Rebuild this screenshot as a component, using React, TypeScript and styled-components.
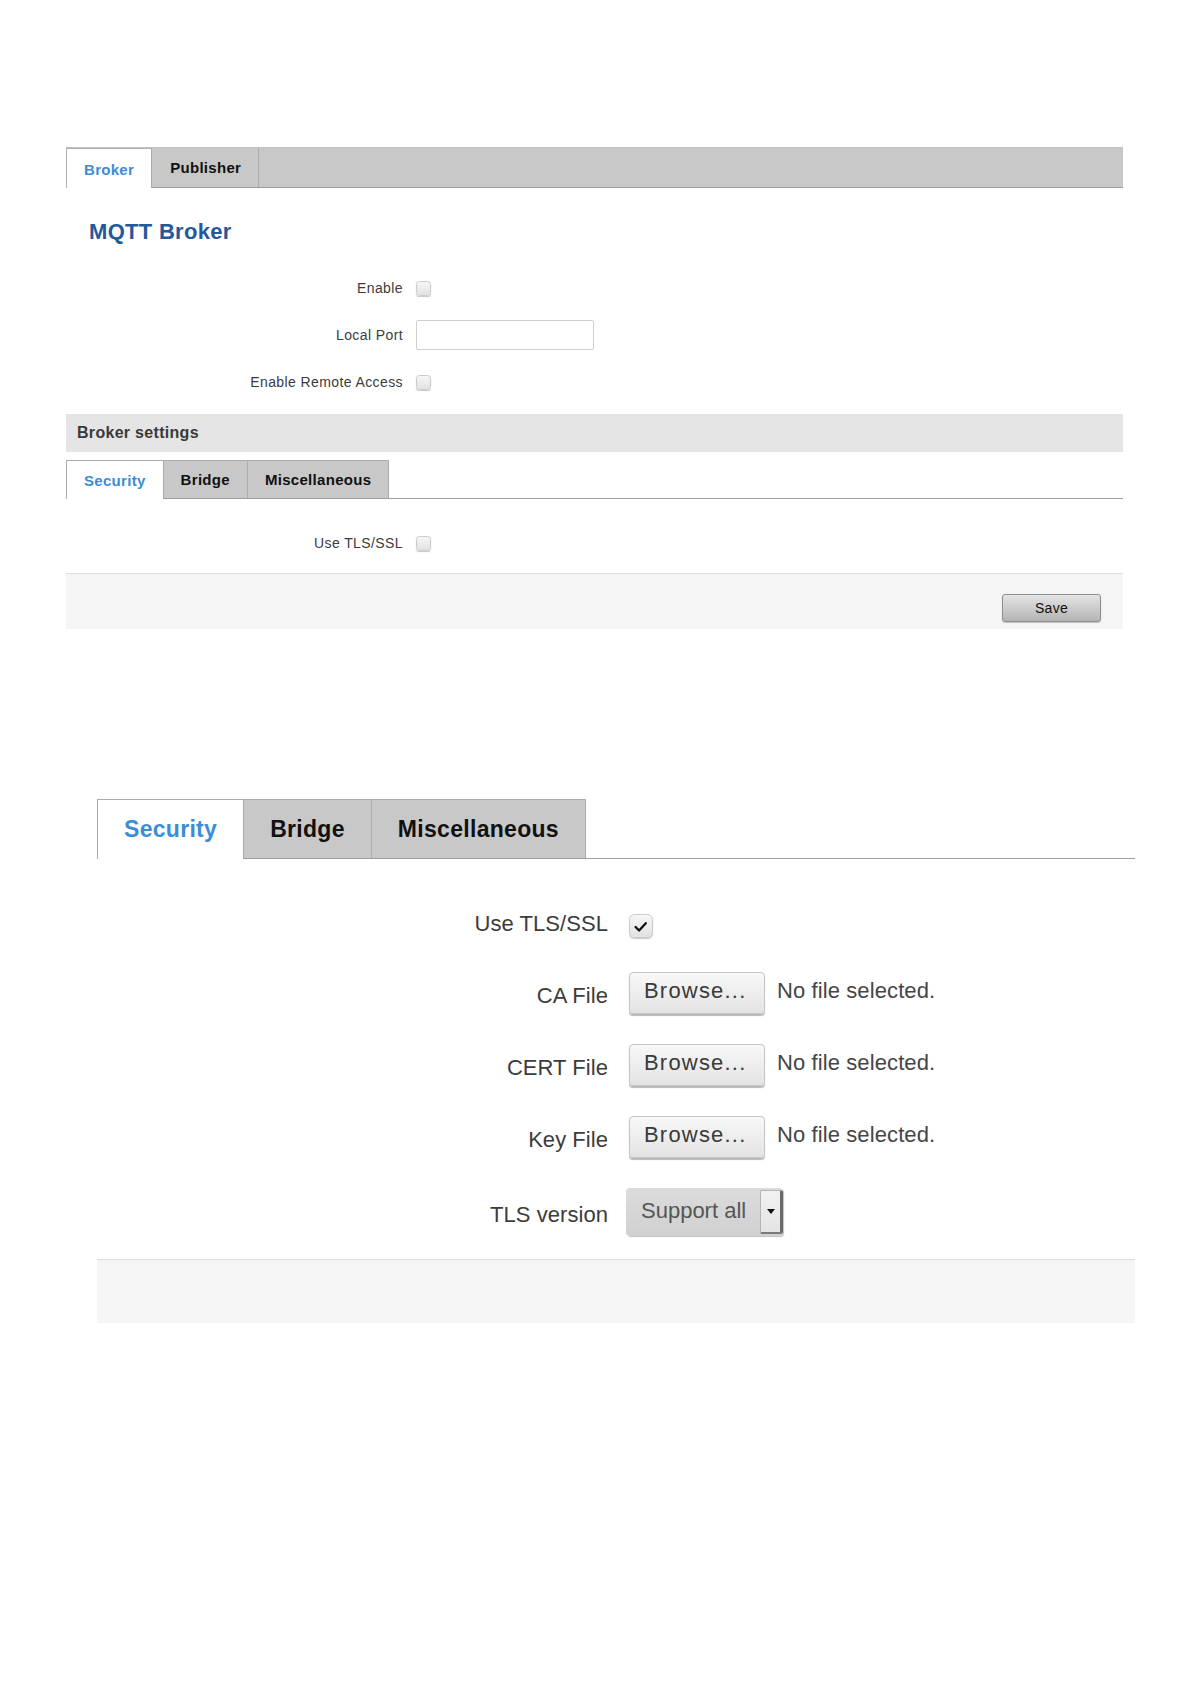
import styled, { createGlobalStyle, ThemeProvider } from "styled-components";

type Look = {
  font: number;
  track: number;
  tabFont: number;
  tabH: number;
  tabPad: number;
  labelW: number;
  gap: number;
  rowH: number;
  rowGap: number;
  rowsTop: number;
  footGap: number;
  footH: number;
  box: number;
  nudge: number;
};

// the same page, once at normal size and once zoomed in
const small: Look = {
  font: 14,
  track: 0.4,
  tabFont: 15,
  tabH: 39,
  tabPad: 17,
  labelW: 337,
  gap: 13,
  rowH: 30,
  rowGap: 17,
  rowsTop: 29,
  footGap: 15,
  footH: 56,
  box: 15,
  nudge: 0,
};

const large: Look = {
  font: 22,
  track: 0.05,
  tabFont: 23,
  tabH: 60,
  tabPad: 26,
  labelW: 511,
  gap: 21,
  rowH: 42,
  rowGap: 30,
  rowsTop: 41,
  footGap: 23,
  footH: 64,
  box: 24,
  nudge: 6,
};

const App = () => {
  return (
    <>
      <GlobalStyle />
      <Page>
        <ThemeProvider theme={small}>
          <Panel $left={66} $width={1057}>
            <MainTabs>
              <MainTab $active>Broker</MainTab>
              <MainTab>Publisher</MainTab>
            </MainTabs>
            <Title>MQTT Broker</Title>
            <Fields $top={28} $bottom={17}>
              <Row>
                <Label>Enable</Label>
                <Check />
              </Row>
              <Row>
                <Label>Local Port</Label>
                <TextInput type="text" />
              </Row>
              <Row>
                <Label>Enable Remote Access</Label>
                <Check />
              </Row>
            </Fields>
            <SectionBar>Broker settings</SectionBar>
            <SubTabs $top={8}>
              <SubTab $active>Security</SubTab>
              <SubTab>Bridge</SubTab>
              <SubTab>Miscellaneous</SubTab>
            </SubTabs>
            <Fields>
              <Row>
                <Label>Use TLS/SSL</Label>
                <Check />
              </Row>
            </Fields>
            <Footer>
              <SaveButton>Save</SaveButton>
            </Footer>
          </Panel>
        </ThemeProvider>

        <ThemeProvider theme={large}>
          <Panel $left={97} $width={1038} $top={170}>
            <SubTabs>
              <SubTab $active>Security</SubTab>
              <SubTab>Bridge</SubTab>
              <SubTab>Miscellaneous</SubTab>
            </SubTabs>
            <Fields>
              <Row>
                <Label>Use TLS/SSL</Label>
                <Check $on />
              </Row>
              {["CA File", "CERT File", "Key File"].map(name => (
                <Row key={name}>
                  <Label>{name}</Label>
                  <BrowseButton>Browse...</BrowseButton>
                  <FileName>No file selected.</FileName>
                </Row>
              ))}
              <Row>
                <Label>TLS version</Label>
                <Select>
                  <SelectText>Support all</SelectText>
                  <SelectArrow>
                    <svg width="8" height="5" viewBox="0 0 8 5">
                      <path d="M0 0h8L4 5z" fill="#111" />
                    </svg>
                  </SelectArrow>
                </Select>
              </Row>
            </Fields>
            <Footer />
          </Panel>
        </ThemeProvider>
      </Page>
    </>
  );
};

const Check = ({ $on }: { $on?: boolean }) => (
  <Box>
    {$on && (
      <svg width="70%" height="70%" viewBox="0 0 24 24">
        <path d="M4 12.5l5.5 5.5L20 6.5" fill="none" stroke="#111" strokeWidth="3.6" strokeLinecap="round" strokeLinejoin="round" />
      </svg>
    )}
  </Box>
);

const GlobalStyle = createGlobalStyle`
  html, body {
    margin: 0;
    padding: 0;
    background: #ffffff;
  }
  body {
    font-family: "Liberation Sans", Arial, sans-serif;
    color: #333333;
  }
`;

const Page = styled.div`
  min-height: 1684px;
  padding-top: 147px;
  display: flex;
  flex-direction: column;
  align-items: flex-start;
  box-sizing: border-box;
`;

const Panel = styled.section<{ $left: number; $width: number; $top?: number }>`
  width: ${p => p.$width}px;
  margin-left: ${p => p.$left}px;
  margin-top: ${p => p.$top ?? 0}px;
  display: flex;
  flex-direction: column;
`;

const MainTabs = styled.div`
  height: 41px;
  display: flex;
  align-items: flex-end;
  background: #c8c8c8;
  border-top: 1px solid #c2c2c2;
  border-bottom: 1px solid #9c9c9c;
  box-sizing: border-box;
`;

const MainTab = styled.div<{ $active?: boolean }>`
  height: ${p => (p.$active ? 40 : 39)}px;
  margin-bottom: ${p => (p.$active ? -1 : 0)}px;
  padding: ${p => (p.$active ? "2px 17px 0" : "0 17px 2px")};
  display: flex;
  align-items: center;
  box-sizing: border-box;
  font-size: 15px;
  font-weight: 700;
  letter-spacing: 0.3px;
  color: ${p => (p.$active ? "#3b8dd5" : "#111111")};
  background: ${p => (p.$active ? "#ffffff" : "transparent")};
  border-left: 1px solid ${p => (p.$active ? "#b0b0b0" : "transparent")};
  border-right: 1px solid #ababab;
  border-top: 1px solid ${p => (p.$active ? "#b0b0b0" : "transparent")};
`;

const Title = styled.h2`
  margin: 31px 0 0 23px;
  font-size: 22px;
  line-height: 26px;
  font-weight: 700;
  letter-spacing: 0.3px;
  color: #25589a;
`;

const Fields = styled.div<{ $top?: number; $bottom?: number }>`
  display: flex;
  flex-direction: column;
  gap: ${p => p.theme.rowGap}px;
  margin-top: ${p => p.$top ?? p.theme.rowsTop}px;
  margin-bottom: ${p => p.$bottom ?? p.theme.footGap}px;
`;

const Row = styled.div`
  min-height: ${p => p.theme.rowH}px;
  display: flex;
  align-items: center;
  gap: ${p => p.theme.gap}px;
`;

const Label = styled.label`
  width: ${p => p.theme.labelW}px;
  padding-top: ${p => p.theme.nudge}px;
  flex-shrink: 0;
  text-align: right;
  font-size: ${p => p.theme.font}px;
  letter-spacing: ${p => p.theme.track}px;
  color: #3c3c3c;
`;

const Box = styled.span`
  width: ${p => p.theme.box}px;
  height: ${p => p.theme.box}px;
  margin-top: ${p => p.theme.nudge * 1.8}px;
  display: inline-flex;
  align-items: center;
  justify-content: center;
  box-sizing: border-box;
  border: 1px solid #cbcbcb;
  border-radius: ${p => p.theme.box / 4.5}px;
  background: linear-gradient(#f6f6f6, #e2e2e2);
  box-shadow: 0 1px 1px rgba(0, 0, 0, 0.22);
`;

const TextInput = styled.input`
  width: 178px;
  height: 30px;
  box-sizing: border-box;
  border: 1px solid #cfcfcf;
  border-radius: 2px;
  background: #ffffff;
  font-family: inherit;
`;

const SectionBar = styled.div`
  height: 38px;
  padding-left: 11px;
  display: flex;
  align-items: center;
  background: #e5e5e5;
  font-size: 16px;
  font-weight: 700;
  letter-spacing: 0.3px;
  color: #3a3a3a;
`;

const SubTabs = styled.div<{ $top?: number }>`
  height: ${p => p.theme.tabH}px;
  margin-top: ${p => p.$top ?? 0}px;
  display: flex;
  align-items: flex-end;
  box-sizing: border-box;
  border-bottom: 1px solid #a0a0a0;
`;

const SubTab = styled.div<{ $active?: boolean }>`
  height: ${p => p.theme.tabH - (p.$active ? 0 : 1)}px;
  margin-bottom: ${p => (p.$active ? -1 : 0)}px;
  padding: 0 ${p => p.theme.tabPad}px;
  display: flex;
  align-items: center;
  box-sizing: border-box;
  font-size: ${p => p.theme.tabFont}px;
  font-weight: 700;
  letter-spacing: 0.3px;
  color: ${p => (p.$active ? "#3b8dd5" : "#111111")};
  background: ${p => (p.$active ? "#ffffff" : "#c8c8c8")};
  border: 1px solid #acacac;
  border-bottom: none;
  border-left-color: ${p => (p.$active ? "#acacac" : "#b8b8b8")};

  & + & {
    border-left: none;
  }
`;

const Footer = styled.div`
  height: ${p => p.theme.footH}px;
  padding: 20px 22px 0 0;
  display: flex;
  justify-content: flex-end;
  align-items: flex-start;
  box-sizing: border-box;
  background: #f5f5f5;
  border-top: 1px solid #dedede;
`;

const SaveButton = styled.button`
  width: 99px;
  height: 28px;
  border: 1px solid #8e8e8e;
  border-radius: 3px;
  background: linear-gradient(#e4e4e4, #b4b4b4);
  box-shadow: 0 1px 1px rgba(0, 0, 0, 0.2);
  font-family: inherit;
  font-size: 14px;
  letter-spacing: 0.3px;
  color: #111111;
`;

const BrowseButton = styled.button`
  width: 136px;
  height: 42px;
  padding: 0 0 4px 14px;
  text-align: left;
  border: 1px solid #c6c6c6;
  border-radius: 4px;
  background: linear-gradient(#f8f8f8, #e3e3e3);
  box-shadow: 0 2px 1px rgba(0, 0, 0, 0.28);
  font-family: inherit;
  font-size: 22px;
  letter-spacing: 1.2px;
  color: #3a3a3a;
`;

const FileName = styled.span`
  margin-left: -9px;
  padding-bottom: 4px;
  font-size: 22px;
  letter-spacing: 0.1px;
  color: #454545;
`;

const Select = styled.div`
  width: 157px;
  height: 48px;
  margin-left: -3px;
  display: flex;
  box-sizing: border-box;
  border-radius: 4px;
  background: linear-gradient(#dcdcdc, #d0d0d0);
  box-shadow: 1px 1px 1px rgba(0, 0, 0, 0.25);
  overflow: hidden;
`;

const SelectText = styled.span`
  flex: 1;
  padding: 0 0 2px 15px;
  display: flex;
  align-items: center;
  font-size: 22px;
  color: #555555;
`;

const SelectArrow = styled.span`
  width: 23px;
  margin: 2px 0;
  display: flex;
  align-items: center;
  justify-content: center;
  box-sizing: border-box;
  background: linear-gradient(#f2f2f2, #e4e4e4);
  border: 1px solid #b5b5b5;
  border-right: 3px solid #6a6a6a;
  border-bottom: 2px solid #7a7a7a;
  border-radius: 2px;
`;

export default App;
